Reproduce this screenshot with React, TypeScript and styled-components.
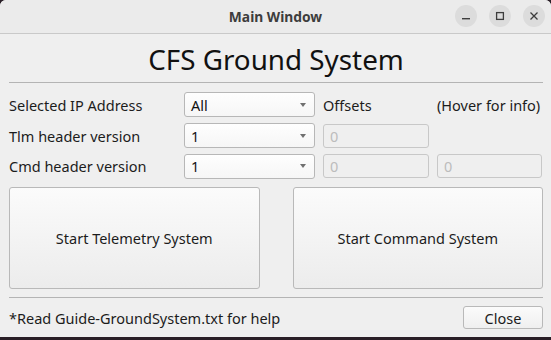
import React from "react";
import styled, { createGlobalStyle } from "styled-components";

const Global = createGlobalStyle`
  html, body { margin: 0; padding: 0; }
  body {
    background: #2a1f27;
    width: 551px;
    height: 340px;
    overflow: hidden;
    font-family: "Noto Sans", "DejaVu Sans", sans-serif;
  }
`;

const Window = styled.div`
  width: 551px;
  height: 337px;
  background: #efefef;
  border-radius: 6px 6px 0 0;
  overflow: hidden;
  display: flex;
  flex-direction: column;
`;

const TitleBar = styled.div`
  position: relative;
  height: 33px;
  flex: none;
  background: #ebebeb;
  border-bottom: 1px solid #c9c9c9;
  display: flex;
  align-items: center;
  justify-content: center;
`;

const TitleText = styled.div`
  font-size: 13.8px;
  font-weight: 700;
  color: #3d3d3d;
  margin-top: -1px;
`;

const WinControls = styled.div`
  position: absolute;
  right: 6px;
  top: 5px;
  display: flex;
  gap: 12px;
`;

const WinBtn = styled.div`
  width: 22px;
  height: 22px;
  border-radius: 50%;
  background: #dcdcdc;
  display: flex;
  align-items: center;
  justify-content: center;
  color: #3d3d3d;
`;

const Content = styled.div`
  flex: 1;
  display: flex;
  flex-direction: column;
  padding: 0 8px 0 9px;
`;

const Heading = styled.h1`
  margin: 0;
  height: 48px;
  display: flex;
  align-items: center;
  justify-content: center;
  font-size: 27.8px;
  font-weight: 400;
  color: #111;
  padding-top: 1px;
  box-sizing: border-box;
`;

const Divider = styled.div<{ $mt?: number }>`
  height: 1px;
  background: #b4b4b4;
  margin-top: ${(p) => p.$mt ?? 0}px;
`;

const Form = styled.div`
  margin-top: 9px;
  display: grid;
  grid-template-columns: 167px 131px 106px 105px;
  grid-template-rows: 25px 25px 24px;
  column-gap: 8px;
  row-gap: 6px;
  align-items: center;
`;

const Label = styled.div<{ $right?: boolean }>`
  font-size: 14.5px;
  color: #1c1c1c;
  white-space: nowrap;
  text-align: ${(p) => (p.$right ? "right" : "left")};
  padding-right: ${(p) => (p.$right ? "2px" : "0")};
`;

const Combo = styled.div`
  height: 25px;
  box-sizing: border-box;
  border: 1px solid #b7b7b7;
  border-radius: 3px;
  background: linear-gradient(#fefefe, #f6f6f6);
  display: flex;
  align-items: center;
  justify-content: space-between;
  padding: 0 8px 0 6px;
  font-size: 14.5px;
  color: #111;
`;

const Arrow = styled.span`
  width: 0;
  height: 0;
  border-left: 3.5px solid transparent;
  border-right: 3.5px solid transparent;
  border-top: 4px solid #707070;
`;

const Edit = styled.div`
  height: 24px;
  box-sizing: border-box;
  border: 1px solid #c8c8c8;
  border-radius: 3px;
  background: #efefef;
  display: flex;
  align-items: center;
  padding: 0 6px;
  font-size: 14.5px;
  color: #bcbcbc;
`;

const BigRow = styled.div`
  margin-top: 9px;
  display: flex;
  gap: 33px;
`;

const BigButton = styled.button`
  flex: 1;
  height: 102px;
  border: 1px solid #b9b9b9;
  border-radius: 3px;
  background: linear-gradient(#fbfbfb, #ececec);
  font-family: inherit;
  font-size: 14.5px;
  color: #1c1c1c;
  padding: 0;
`;

const Footer = styled.div`
  margin-top: 8px;
  display: flex;
  align-items: center;
  justify-content: space-between;
`;

const CloseButton = styled.button`
  width: 80px;
  height: 23px;
  border: 1px solid #b9b9b9;
  border-radius: 3px;
  background: linear-gradient(#fbfbfb, #efefef);
  font-family: inherit;
  font-size: 14.5px;
  color: #1c1c1c;
  padding: 0;
`;

const Spacer = styled.div``;

export default function App() {
  return (
    <>
      <Global />
      <Window>
        <TitleBar>
          <TitleText>Main Window</TitleText>
          <WinControls>
            <WinBtn>
              <svg width="10" height="10" viewBox="0 0 10 10">
                <rect x="1" y="7" width="8" height="1.4" fill="currentColor" />
              </svg>
            </WinBtn>
            <WinBtn>
              <svg width="10" height="10" viewBox="0 0 10 10">
                <rect x="1.6" y="1.6" width="6.8" height="6.8" fill="none" stroke="currentColor" strokeWidth="1.3" />
              </svg>
            </WinBtn>
            <WinBtn>
              <svg width="10" height="10" viewBox="0 0 10 10">
                <path d="M1.5 1.5 L8.5 8.5 M8.5 1.5 L1.5 8.5" stroke="currentColor" strokeWidth="1.3" />
              </svg>
            </WinBtn>
          </WinControls>
        </TitleBar>
        <Content>
          <Heading>CFS Ground System</Heading>
          <Divider />
          <Form>
            <Label>Selected IP Address</Label>
            <Combo>
              All
              <Arrow />
            </Combo>
            <Label>Offsets</Label>
            <Label $right>(Hover for info)</Label>

            <Label>Tlm header version</Label>
            <Combo>
              1
              <Arrow />
            </Combo>
            <Edit>0</Edit>
            <Spacer />

            <Label>Cmd header version</Label>
            <Combo>
              1
              <Arrow />
            </Combo>
            <Edit>0</Edit>
            <Edit>0</Edit>
          </Form>
          <BigRow>
            <BigButton>Start Telemetry System</BigButton>
            <BigButton>Start Command System</BigButton>
          </BigRow>
          <Divider $mt={8} />
          <Footer>
            <Label>*Read Guide-GroundSystem.txt for help</Label>
            <CloseButton>Close</CloseButton>
          </Footer>
        </Content>
      </Window>
    </>
  );
}
